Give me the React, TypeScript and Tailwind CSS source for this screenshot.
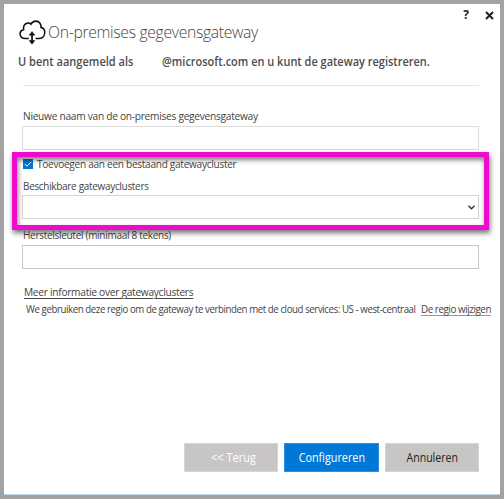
import React from "react";

function GatewayIcon() {
  return (
    <svg className="mr-px block h-[26px] w-[27px] shrink-0" viewBox="0 0 28 26" preserveAspectRatio="none" fill="none" stroke="#111" strokeWidth="1.6">
      <path d="M10.2 18.5H6.4C3.4 18.5 1.1 16.7 1.1 14.1C1.1 11.7 2.7 10 4.8 9.6C4.1 6.2 5.9 3.5 8.8 3.1C10.3 2.8 11.6 3.3 12.4 4.2C13.5 2 15.3 1.1 17.5 1.1C21 1.1 23.2 3.8 22.8 7.4C25.3 7.9 26.7 9.8 26.7 12.3C26.7 15.6 24.6 18.5 21 18.5H17.2" />
      <path d="M13.5 13V23" strokeWidth="1.8" />
      <path d="M10.5 15.2L13.5 11.6L16.5 15.2ZM10.5 20.6L13.5 24.2L16.5 20.6Z" fill="#111" strokeWidth="0.5" />
    </svg>
  );
}

export default function App() {
  return (
    <div className="h-[499px] w-[504px] bg-[#a3a3a3] px-1 pt-1 font-['Open_Sans','Noto_Sans',sans-serif] text-[#444]">
      <main className="relative flex h-[491px] flex-col border-b border-[#b8d9f0] bg-white whitespace-nowrap">
        <div className="flex h-[16px] items-end justify-end pr-[6px] text-[#222]">
          <span className="mr-[16px] h-[13px] text-[12px] leading-[16px] font-bold">?</span>
          <svg className="h-[9px] w-[9px] self-end" viewBox="0 0 9 9" stroke="#222" strokeWidth="2">
            <path d="M1 1L8 8M8 1L1 8" />
          </svg>
        </div>
        <header className="flex h-[28px] items-start pl-[15px]">
          <GatewayIcon />
          <h1 className="ml-px origin-left scale-x-[0.925] text-[17px] leading-[23px] font-light tracking-[-0.35px]">On-premises gegevensgateway</h1>
        </header>
        <p className="flex h-[37px] pt-[2px] pl-[14px] text-[12px] leading-[24px] font-semibold text-[#4d4d4d]">
          <span className="w-[144px] origin-left scale-x-[0.92]">U bent aangemeld als</span>
          <span className="origin-left scale-x-[0.915]">@microsoft.com en u kunt de gateway registreren.</span>
        </p>
        <hr className="mr-[21px] ml-[19px] h-px border-0 bg-[#e3e3e3]" />
        <div className="mx-[18px] flex flex-col items-start text-[11px] leading-[16px] tracking-[-0.3px]">
          <label className="mt-[22px] ml-px h-[18px] origin-left scale-x-[0.925]">Nieuwe naam van de on-premises gegevensgateway</label>
          <div className="h-[24px] w-[457px] border border-[#dedede]" />
          <label className="mt-[6px] flex h-[20px] items-start pl-px">
            <span className="mt-[3px] flex h-[10px] w-[10px] items-center justify-center bg-[#0078d7]">
              <svg className="h-2 w-2" viewBox="0 0 8 8" fill="none" stroke="white"><path d="M0.7 4L3 6.2L7.3 1.8" /></svg>
            </span>
            <span className="ml-1 origin-left scale-x-[0.915]">Toevoegen aan een bestaand gatewaycluster</span>
          </label>
          <label className="mt-[2px] ml-px h-[17px] origin-left scale-x-[0.9]">Beschikbare gatewayclusters</label>
          <div className="flex h-[24px] w-[457px] items-center justify-end border border-[#d5d5d5] pr-[3px]">
            <svg className="h-[5px] w-[7px]" viewBox="0 0 7 5" fill="none" stroke="#333" strokeWidth="1.4"><path d="M0.5 0.7L3.5 3.7L6.5 0.7" /></svg>
          </div>
          <label className="mt-[8px] ml-px h-[18px] origin-left scale-x-[0.905]">Herstelsleutel (minimaal 8 tekens)</label>
          <div className="h-[24px] w-[457px] border border-[#c7c7c7]" />
          <a className="mt-[15px] ml-[2px] h-[17px] origin-left scale-x-[0.925] underline underline-offset-2">Meer informatie over gatewayclusters</a>
          <div className="flex pl-[4px] text-[10.5px] tracking-[-0.45px]">
            <span className="w-[395px]">
              <span className="inline-block w-[424px] origin-left scale-x-[0.92]">We gebruiken deze regio om de gateway te verbinden met de cloud services: US - west-centraal</span>
            </span>
            <a className="h-[15px] origin-left scale-x-[0.93] border-b border-[#999]">De regio wijzigen</a>
          </div>
        </div>
        <footer className="mt-auto mr-[21px] mb-[22px] flex justify-end gap-[6px] text-[12px]">
          <button className="h-[29px] w-[94px] border border-[#d5d5d5] bg-[#c8c6c5] pt-px pl-1 text-white">
            <span className="inline-block scale-x-[0.92]">&lt;&lt; Terug</span>
          </button>
          <button className="h-[29px] w-[95px] border border-[#2b8ee0] bg-[#0078d7] pt-px text-white">
            <span className="inline-block scale-x-[0.9]">Configureren</span>
          </button>
          <button className="h-[29px] w-[94px] border border-[#d5d5d5] bg-[#c8c6c5] text-[#222]">
            <span className="inline-block scale-x-[0.88]">Annuleren</span>
          </button>
        </footer>
        <div className="pointer-events-none absolute top-[148px] left-[8px] h-[78px] w-[477px] border-[5px] border-[#ef0bcb] shadow-[1px_3px_5px_rgba(0,0,0,0.55),inset_1px_3px_5px_rgba(0,0,0,0.5)]" />
      </main>
    </div>
  );
}
